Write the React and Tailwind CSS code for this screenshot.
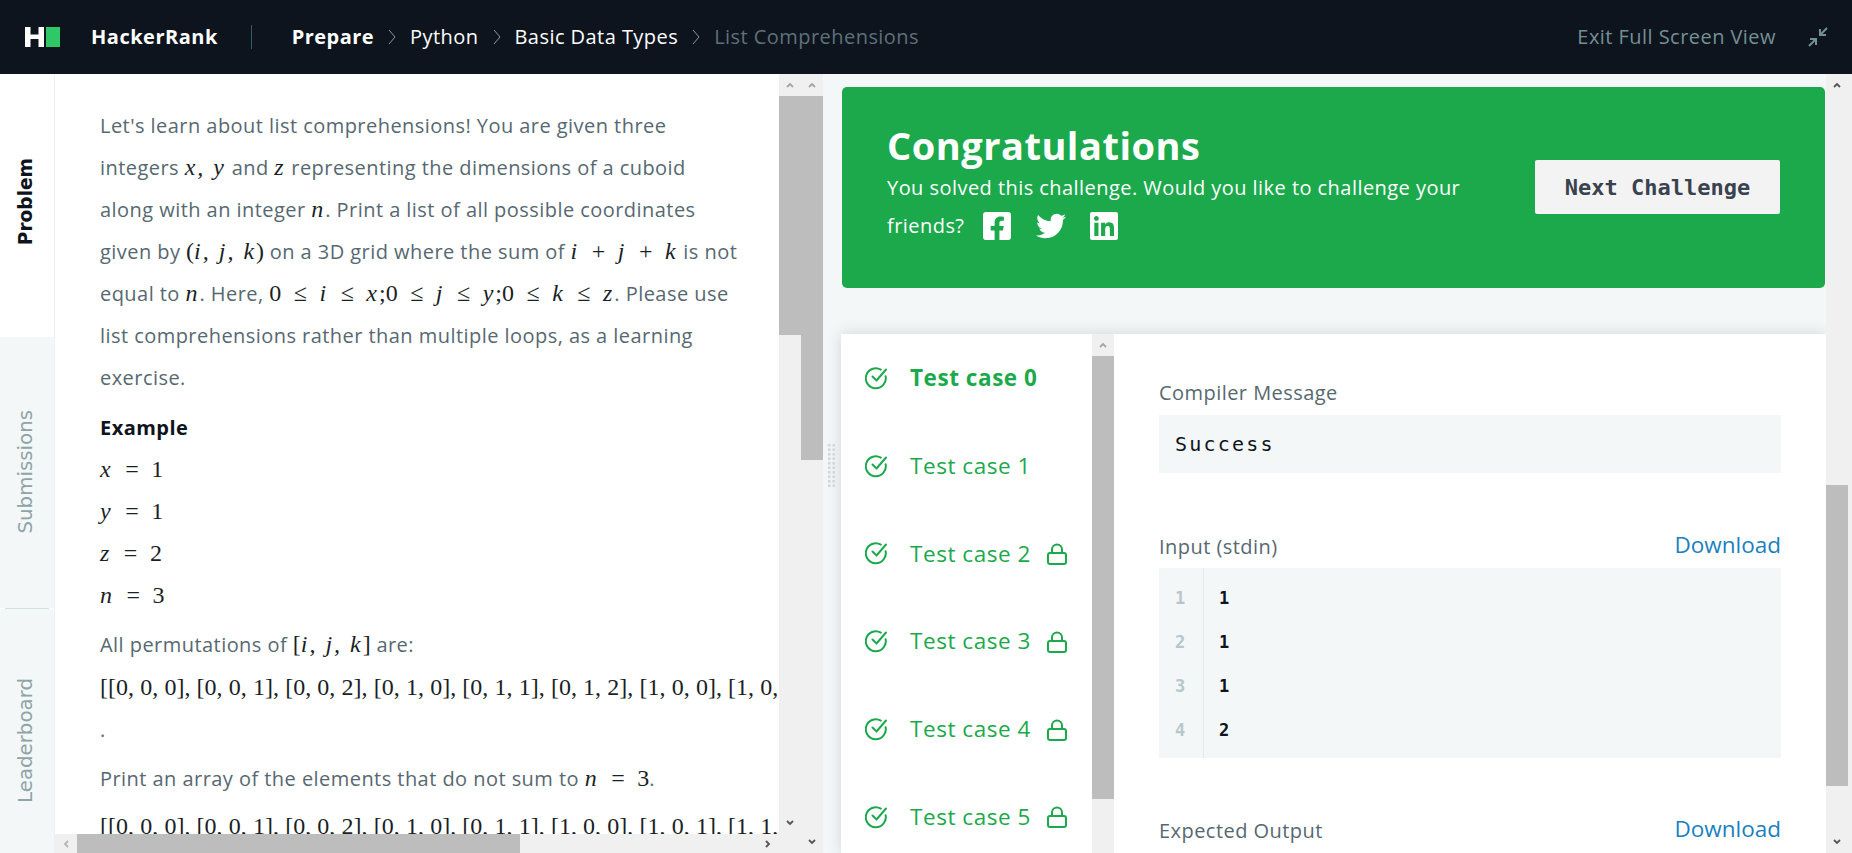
import React from "react";
import { FaFacebookSquare, FaTwitter, FaLinkedin } from "react-icons/fa";

const M = ({ children }) => (
  <span className="font-['Liberation_Serif',serif] italic text-[24px] leading-none tracking-[2px] text-[#1b1f26]">{children}</span>
);
const R = ({ children }) => (
  <span className="font-['Liberation_Serif',serif] text-[24px] leading-none tracking-normal [word-spacing:6.5px] text-[#1b1f26]">{children}</span>
);
const L = ({ children }) => (
  <span className="font-['Liberation_Serif',serif] text-[24px] leading-none tracking-normal [word-spacing:0.2px] text-[#1b1f26]">{children}</span>
);

const Chevron = ({ dir = "up", color = "#555" }) => {
  const rot = { up: "rotate-0", down: "rotate-180", left: "-rotate-90", right: "rotate-90" }[dir];
  return (
    <svg viewBox="0 0 8 6" className={`w-2 h-[6px] ${rot}`} fill="none" stroke={color} strokeWidth="1.8">
      <path d="M1 5 L4 2 L7 5" />
    </svg>
  );
};

const VBar = ({ before, thumb, down = true, upColor = "#a5a5a5", downColor = "#555" }) => (
  <div className="w-[22px] h-full bg-[#f0f0f0] flex flex-col shrink-0 relative">
    <div className="h-[22px] flex items-center justify-center shrink-0"><Chevron dir="up" color={upColor} /></div>
    <div className="bg-[#bdbdbd] shrink-0" style={{ height: thumb, marginTop: before }} />
    <div className="flex-1 flex items-end justify-center pb-[8px]">{down && <Chevron dir="down" color={downColor} />}</div>
  </div>
);

const Sep = () => (
  <svg viewBox="0 0 10 18" className="w-[10px] h-[18px] mx-[13px]" fill="none" stroke="#8a97a0" strokeWidth="1">
    <path d="M2 2 L8 9 L2 16" />
  </svg>
);

const CheckIcon = () => (
  <svg viewBox="0 0 24 24" className="w-6 h-6 shrink-0" fill="none" stroke="#1ba94c" strokeWidth="2" strokeLinecap="round" strokeLinejoin="round">
    <path d="M20.6 10.2 A10 10 0 1 1 15.8 3.6" />
    <path d="M7.5 10.5 L11.5 14.5 L21 3.5" />
  </svg>
);

const LockIcon = () => (
  <svg viewBox="0 0 20 22" className="w-5 h-[22px]" fill="none" stroke="#1ba94c" strokeWidth="2" strokeLinejoin="round">
    <rect x="1" y="10" width="18" height="11" rx="2" />
    <path d="M5 10 V6.5 A5 5 0 0 1 15 6.5 V10" />
  </svg>
);

const TestCase = ({ n, active, lock }) => (
  <div className="h-[87.8px] shrink-0 flex items-center pl-6">
    <CheckIcon />
    <span className={`ml-[21px] text-[22.5px] tracking-[0.55px] text-[#1ba94c] ${active ? "font-bold" : ""}`}>Test case {n}</span>
    {lock && <span className="ml-[16px] mt-[1px] flex"><LockIcon /></span>}
  </div>
);

const Label = ({ children, download }) => (
  <div className="flex justify-between items-end">
    <span className="text-[20px] text-[#576871] leading-[28px]">{children}</span>
    {download && <span className="text-[22.5px] tracking-normal text-[#1a7fc1] leading-[30px] mb-[1px]">Download</span>}
  </div>
);

const CodeLine = ({ n, v }) => (
  <div className="h-[44px] flex items-center">
    <span className="w-[44px] pl-4 text-[17px] font-bold text-[#b7c7cc] tracking-normal font-['DejaVu_Sans_Mono',monospace]">{n}</span>
    <span className="pl-4 text-[17px] font-bold text-[#0e141e] tracking-normal font-['DejaVu_Sans_Mono',monospace]">{v}</span>
  </div>
);

const Tab = ({ children, active, cls }) => (
  <div className={`flex justify-center items-start ${cls} ${active ? "bg-white" : "bg-[#f3f7f7]"}`}>
    <span className={`[writing-mode:vertical-rl] rotate-180 tracking-normal font-['DejaVu_Sans',sans-serif] ${active ? "text-[18.6px] font-bold text-[#0e141e] mr-[2px]" : "text-[19.8px] text-[#8ea4a8] mr-[2px]"}`}>{children}</span>
  </div>
);

export default function App() {
  return (
    <div className="w-[1852px] h-[853px] overflow-hidden flex flex-col bg-white font-['Open_Sans',sans-serif] tracking-[0.45px] relative">
      <header className="h-[74px] shrink-0 bg-[#0e141e] flex items-center text-[20px] text-white pl-[25px] pr-[24px]">
        <div className="flex items-center h-5">
          <svg viewBox="0 0 35 20" className="w-[35px] h-5">
            <path d="M0 0h5.5v7.5h8V0H19v20h-5.5v-8h-8v8H0z" fill="#fff" />
            <rect x="21" y="0" width="14" height="20" fill="#2ec866" />
          </svg>
        </div>
        <span className="ml-[31px] font-bold text-[20px] tracking-[0.5px]">HackerRank</span>
        <div className="ml-[33px] w-px h-6 bg-[#39566b]" />
        <span className="ml-[40px] font-bold">Prepare</span>
        <Sep />
        <span>Python</span>
        <Sep />
        <span>Basic Data Types</span>
        <Sep />
        <span className="text-[#5e7079]">List Comprehensions</span>
        <span className="ml-auto text-[#738f93]">Exit Full Screen View</span>
        <svg viewBox="0 0 20 20" className="w-5 h-5 ml-[32px]" fill="none" stroke="#738f93" strokeWidth="2">
          <path d="M19 1 L12 8 M12 2 V8 H18" />
          <path d="M1 19 L8 12 M2 12 H8 V18" />
        </svg>
      </header>

      <div className="flex-1 flex min-h-0">
        {/* tabs */}
        <div className="w-[55px] shrink-0 flex flex-col border-r border-[#eef1f2]">
          <Tab active cls="h-[263px] pt-[84px]">Problem</Tab>
          <Tab cls="h-[271px] pt-[73px]">Submissions</Tab>
          <div className="mx-[5px] h-px bg-[#d5dfe1]" />
          <Tab cls="flex-1 pt-[69px]">Leaderboard</Tab>
        </div>

        {/* left */}
        <div className="w-[746px] shrink-0 flex flex-col">
          <div className="flex flex-1 min-h-0">
            <div className="w-[724px] shrink-0 overflow-hidden pl-[45px] pt-[31px] text-[20px] text-[#576871] leading-[42px] whitespace-nowrap">
              <p>Let's learn about list comprehensions! You are given three</p>
              <p>integers <M>x, y</M> and <M>z</M> representing the dimensions of a cuboid</p>
              <p>along with an integer <M>n</M>. Print a list of all possible coordinates</p>
              <p>given by <R>(</R><M>i, j, k</M><R>)</R> on a 3D grid where the sum of <M>i</M><R> + </R><M>j</M><R> + </R><M>k</M> is not</p>
              <p>equal to <M>n</M>. Here, <R>0 ≤ </R><M>i</M><R> ≤ </R><M>x</M><R>;0 ≤ </R><M>j</M><R> ≤ </R><M>y</M><R>;0 ≤ </R><M>k</M><R> ≤ </R><M>z</M>. Please use</p>
              <p>list comprehensions rather than multiple loops, as a learning</p>
              <p>exercise.</p>
              <p className="mt-2 font-bold text-[#0e141e]">Example</p>
              <p><M>x</M><R> = 1</R></p>
              <p><M>y</M><R> = 1</R></p>
              <p><M>z</M><R> = 2</R></p>
              <p><M>n</M><R> = 3</R></p>
              <p className="mt-[7px]">All permutations of <R>[</R><M>i, j, k</M><R>]</R> are:</p>
              <p className="mt-[1px]"><L>[[0, 0, 0], [0, 0, 1], [0, 0, 2], [0, 1, 0], [0, 1, 1], [0, 1, 2], [1, 0, 0], [1, 0, 1], [1, 1, 0]]</L></p>
              <p>.</p>
              <p className="mt-[7px]">Print an array of the elements that do not sum to <M>n</M><R> = 3</R>.</p>
              <p className="mt-[6px]"><L>[[0, 0, 0], [0, 0, 1], [0, 0, 2], [0, 1, 0], [0, 1, 1], [1, 0, 0], [1, 0, 1], [1, 1, 0]]</L></p>
            </div>
            <VBar thumb={239} before={0} upColor="#a5a5a5" downColor="#555" />
          </div>
          <div className="h-[19px] shrink-0 flex bg-[#f0f0f0]">
            <div className="w-[22px] flex items-center justify-center"><Chevron dir="left" color="#b5b5b5" /></div>
            <div className="w-[443px] bg-[#bdbdbd]" />
            <div className="w-[259px] flex items-center justify-end pr-[7px]"><Chevron dir="right" color="#555" /></div>
            <div className="w-[22px]" />
          </div>
        </div>

        <VBar thumb={364} before={0} upColor="#a5a5a5" />

        {/* right */}
        <div className="flex-1 min-w-0 flex bg-[#f3f7f7]">
          <div className="w-[1003px] shrink-0 pl-[18px] pt-[13px] flex flex-col relative">
            <div className="absolute left-[4px] top-[369px] w-[9px] h-[45px] bg-[radial-gradient(circle,#d4d8da_1.5px,transparent_1.6px)] bg-[length:4.5px_4.5px]" />
            <section className="h-[201px] shrink-0 mx-px bg-[#1ba94c] rounded-[5px] flex items-center pl-[45px] pr-[45px] text-white">
              <div className="flex-1 pb-[6px]">
                <h1 className="text-[38px] font-bold leading-[46px] mt-[-2px] tracking-[0.5px]">Congratulations</h1>
                <p className="text-[20px] leading-[38px] w-[590px] mt-px">You solved this challenge. Would you like to challenge your</p>
                <p className="text-[20px] leading-[38px] flex items-center">
                  friends?
                  <FaFacebookSquare className="ml-[17px] text-[32px]" />
                  <FaTwitter className="ml-[23px] text-[30px]" />
                  <FaLinkedin className="ml-[22px] text-[32px]" />
                </p>
              </div>
              <button className="w-[245px] h-[54px] mb-[2px] pt-[2px] bg-[#f3f3f3] rounded-[2px] text-[#39424e] text-[22px] tracking-normal font-bold font-['DejaVu_Sans_Mono',monospace]">Next Challenge</button>
            </section>

            <section className="mt-[46px] flex-1 min-h-0 bg-white flex shadow-[0_0_14px_rgba(57,66,78,0.18)] overflow-hidden">
              <div className="w-[251px] shrink-0 flex flex-col">
                <TestCase n={0} active />
                <TestCase n={1} />
                <TestCase n={2} lock />
                <TestCase n={3} lock />
                <TestCase n={4} lock />
                <TestCase n={5} lock />
              </div>
              <div className="h-full"><VBar thumb={443} before={0} down={false} upColor="#a5a5a5" /></div>
              <div className="flex-1 px-[45px] pt-[45px] min-w-0">
                <Label>Compiler Message</Label>
                <div className="mt-[8px] h-[58px] bg-[#f3f7f7] flex items-center pl-4 text-[20px] tracking-[2.2px] text-[#0e141e] font-['DejaVu_Sans_Mono',monospace]">Success</div>
                <div className="mt-[57px]"><Label download>Input (stdin)</Label></div>
                <div className="mt-[7px] h-[190px] bg-[#f3f7f7] pt-[9px] relative">
                  <div className="absolute left-[44px] top-0 bottom-0 w-px bg-[#e3eaec]" />
                  <CodeLine n="1" v="1" />
                  <CodeLine n="2" v="1" />
                  <CodeLine n="3" v="1" />
                  <CodeLine n="4" v="2" />
                </div>
                <div className="mt-[56px]"><Label download>Expected Output</Label></div>
              </div>
            </section>
          </div>
          <div className="flex-1 bg-[#f0f0f0]">
            <VBar thumb={301} before={389} upColor="#555" />
          </div>
        </div>
      </div>
    </div>
  );
}
